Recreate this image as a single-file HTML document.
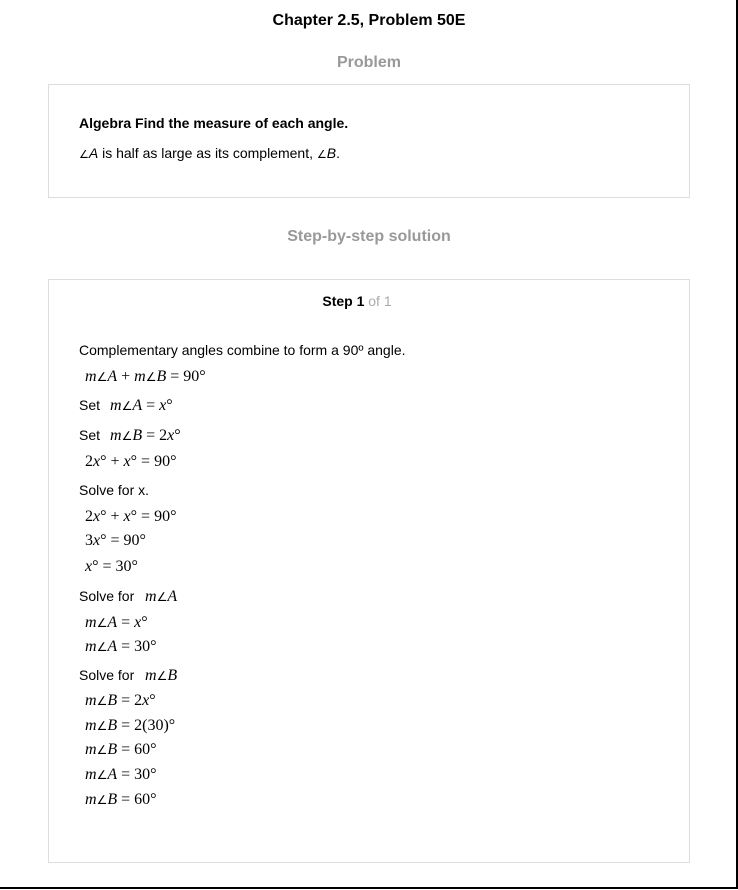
<!DOCTYPE html>
<html><head><style>
body{margin:0;width:738px;height:890px;position:relative;background:#fff;font-family:"Liberation Sans",sans-serif;overflow:hidden}
.frame{position:absolute;left:0;top:0;width:736px;height:887px;border-right:2px solid #000;border-bottom:2px solid #000}
.a{position:absolute;white-space:nowrap}
.box{position:absolute;border:1px solid #ddd}
.m{font-family:"Liberation Serif",serif;font-size:16px}
.m i{font-style:italic}
.g{font-size:12px;font-family:"DejaVu Sans",sans-serif}
.t{font-size:14px}
</style></head><body>
<div class="frame"></div>
<div class="a" style="left:0;width:738px;text-align:center;top:12px;font-size:16px;font-weight:bold">Chapter 2.5, Problem 50E</div>
<div class="a" style="left:0;width:738px;text-align:center;top:54px;font-size:16px;font-weight:bold;color:#999">Problem</div>
<div class="box" style="left:48px;top:84px;width:640px;height:112px"></div>
<div class="a t" style="left:79px;top:115px;font-weight:bold">Algebra Find the measure of each angle.</div>
<div class="a t" style="left:79px;top:145px"><span class="g" style="font-size:11px">∠</span><i>A</i> is half as large as its complement, <span class="g" style="font-size:11px">∠</span><i>B</i>.</div>
<div class="a" style="left:0;width:738px;text-align:center;top:228px;font-size:16px;font-weight:bold;color:#999">Step-by-step solution</div>
<div class="box" style="left:48px;top:279px;width:640px;height:582px"></div>
<div class="a t" style="left:0;width:714px;text-align:center;top:293px"><b>Step 1</b> <span style="color:#aaa">of 1</span></div>
<div class="a t" style="left:79px;top:342px">Complementary angles combine to form a 90º angle.</div>
<div class="a m" style="left:85px;top:368px"><i>m</i><span class="g">∠</span><i>A</i> + <i>m</i><span class="g">∠</span><i>B</i> = 90°</div>
<div class="a t" style="left:79px;top:397px">Set</div><div class="a m" style="left:110px;top:397px"><i>m</i><span class="g">∠</span><i>A</i> = <i>x</i>°</div>
<div class="a t" style="left:79px;top:427px">Set</div><div class="a m" style="left:110px;top:427px"><i>m</i><span class="g">∠</span><i>B</i> = 2<i>x</i>°</div>
<div class="a m" style="left:85px;top:453px">2<i>x</i>° + <i>x</i>° = 90°</div>
<div class="a t" style="left:79px;top:482px">Solve for x.</div>
<div class="a m" style="left:85px;top:508px">2<i>x</i>° + <i>x</i>° = 90°</div>
<div class="a m" style="left:85px;top:532px">3<i>x</i>° = 90°</div>
<div class="a m" style="left:85px;top:558px"><i>x</i>° = 30°</div>
<div class="a t" style="left:79px;top:588px">Solve for</div><div class="a m" style="left:145px;top:588px"><i>m</i><span class="g">∠</span><i>A</i></div>
<div class="a m" style="left:85px;top:614px"><i>m</i><span class="g">∠</span><i>A</i> = <i>x</i>°</div>
<div class="a m" style="left:85px;top:638px"><i>m</i><span class="g">∠</span><i>A</i> = 30°</div>
<div class="a t" style="left:79px;top:667px">Solve for</div><div class="a m" style="left:145px;top:667px"><i>m</i><span class="g">∠</span><i>B</i></div>
<div class="a m" style="left:85px;top:692px"><i>m</i><span class="g">∠</span><i>B</i> = 2<i>x</i>°</div>
<div class="a m" style="left:85px;top:717px"><i>m</i><span class="g">∠</span><i>B</i> = 2(30)°</div>
<div class="a m" style="left:85px;top:741px"><i>m</i><span class="g">∠</span><i>B</i> = 60°</div>
<div class="a m" style="left:85px;top:766px"><i>m</i><span class="g">∠</span><i>A</i> = 30°</div>
<div class="a m" style="left:85px;top:791px"><i>m</i><span class="g">∠</span><i>B</i> = 60°</div>
</body></html>
